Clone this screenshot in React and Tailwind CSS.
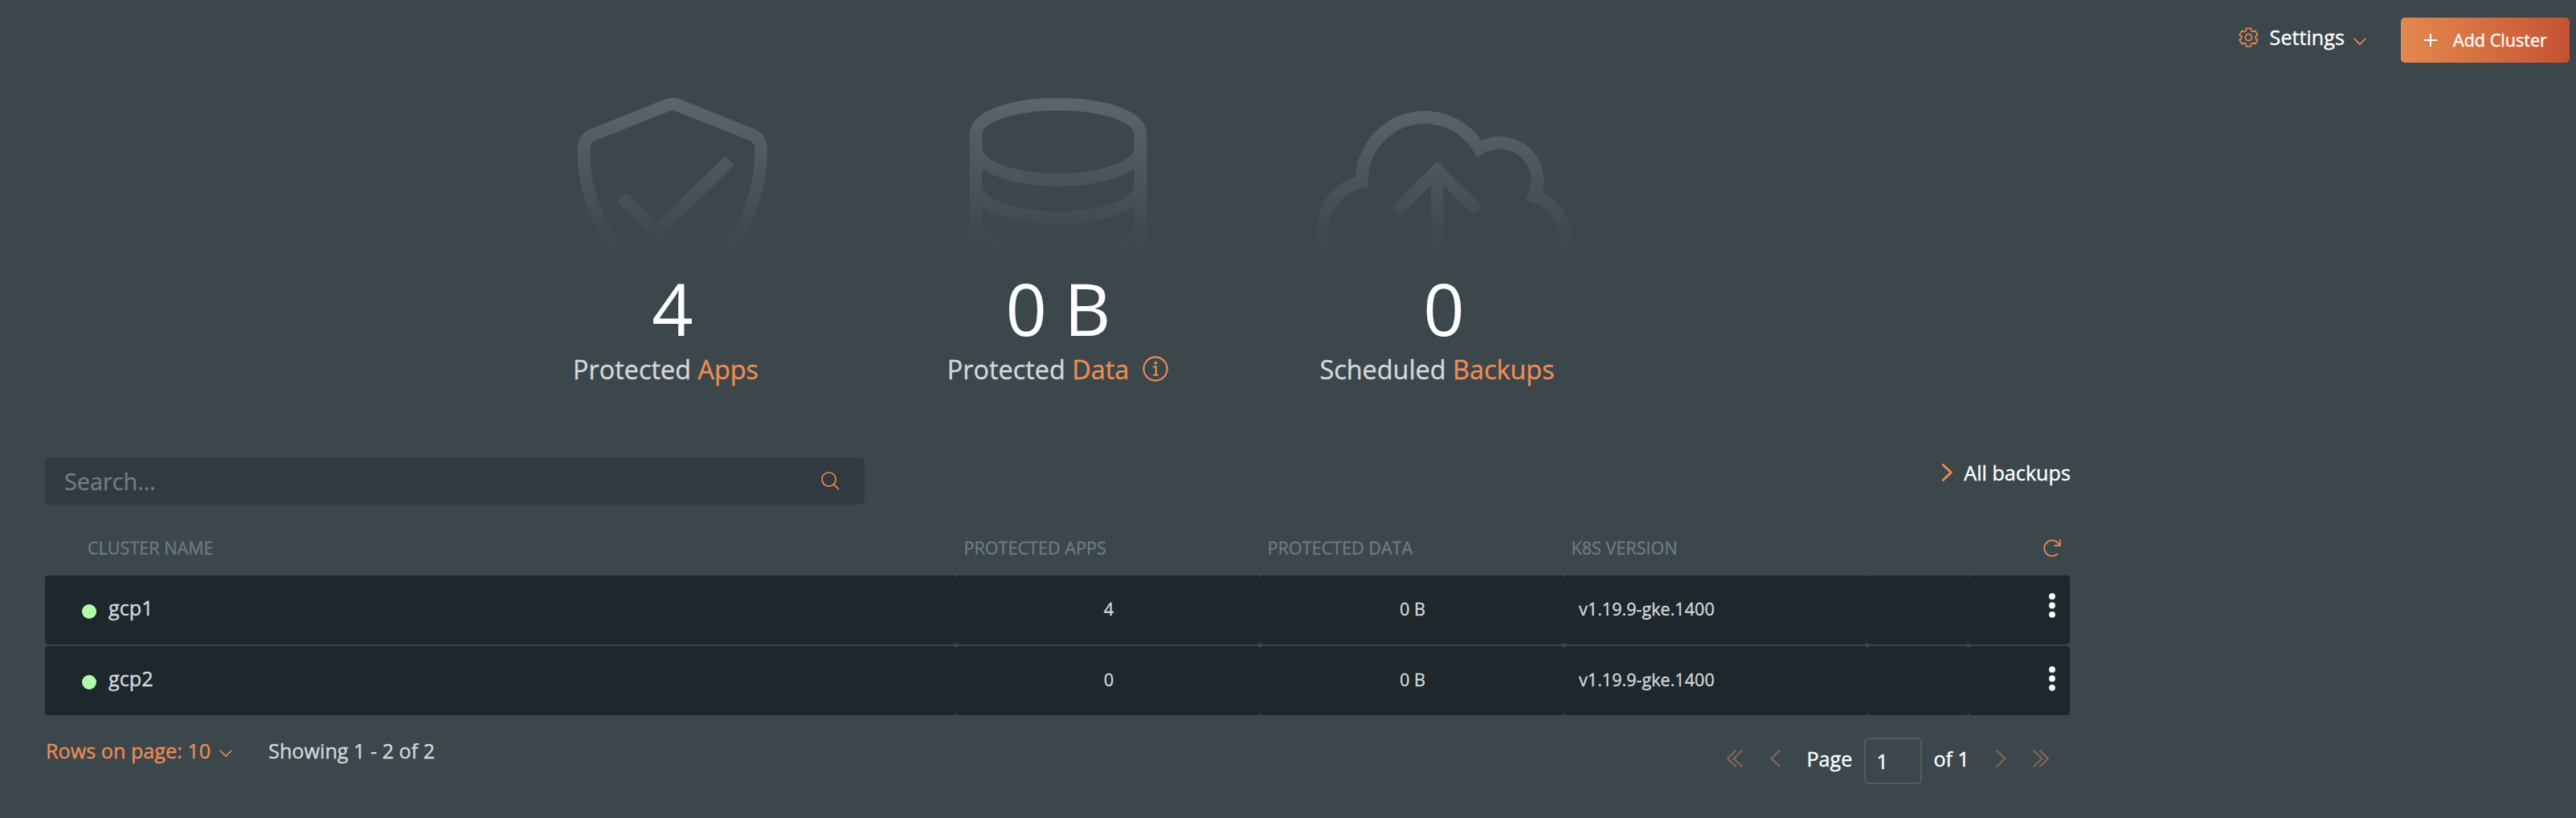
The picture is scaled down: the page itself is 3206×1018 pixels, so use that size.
const ORANGE = "#ee8b52";

function Fade({ id }) {
  return (
    <linearGradient id={id} gradientUnits="userSpaceOnUse" x1="0" y1="122" x2="0" y2="330">
      <stop offset="0" stopColor="#5b666b" />
      <stop offset="0.8" stopColor="#3f4a50" />
      <stop offset="1" stopColor="#3c474d" />
    </linearGradient>
  );
}

function ShieldArt() {
  return (
    <svg viewBox="597 122 480 208" className="h-[208px] w-[480px]" fill="none">
      <defs><Fade id="fade-shield" /></defs>
      <path
        d="M831 130.7Q837 128.8 843 130.7L938 168.6Q947.3 173.5 947.3 187C947.3 240 929 285 888 335M843 130.7Q837 128.8 831 130.7L736 168.6Q726.4 173.5 726.4 187C726.4 240 745 285 786 335"
        stroke="url(#fade-shield)" strokeWidth="15.6"
      />
      <path
        d="M779.5 243.4L772.5 251.4L818 296L909.6 205.6L902.4 198.6L818 281.2Z"
        fill="url(#fade-shield)" stroke="url(#fade-shield)" strokeWidth="6" strokeLinejoin="round"
      />
    </svg>
  );
}

function DatabaseArt() {
  return (
    <svg viewBox="1077 122 480 208" className="h-[208px] w-[480px]" fill="none">
      <defs><Fade id="fade-db" /></defs>
      <g stroke="url(#fade-db)" strokeWidth="15.7">
        <path d="M1214.5 335V168C1214.5 145 1260 129.7 1317 129.7S1419.4 145 1419.4 168V335" />
        <path d="M1214.5 185C1214.5 207 1260 223.8 1317 223.8S1419.4 207 1419.4 185" />
        <path d="M1214.5 232C1214.5 254 1260 270.9 1317 270.9S1419.4 254 1419.4 232" />
        <path d="M1214.5 279C1214.5 301 1260 318 1317 318S1419.4 301 1419.4 279" />
      </g>
    </svg>
  );
}

function CloudArt() {
  return (
    <svg viewBox="1557 122 480 208" className="h-[208px] w-[480px]" fill="none">
      <defs><Fade id="fade-cloud" /></defs>
      <path
        d="M1666 332A62 62 0 0 1 1695 226A78.3 78.3 0 0 1 1841 185A47.2 47.2 0 0 1 1909.5 244A56 56 0 0 1 1935 332"
        stroke="url(#fade-cloud)" strokeWidth="15.7"
      />
      <path
        d="M1788.7 205.2L1841 257.1L1834.5 263.8L1788.7 218.8L1743 263.8L1736.5 257.1Z"
        fill="url(#fade-cloud)" stroke="url(#fade-cloud)" strokeWidth="6" strokeLinejoin="round"
      />
      <rect x="1781" y="215" width="15.6" height="96" rx="4" fill="url(#fade-cloud)" />
    </svg>
  );
}

function gearPath() {
  const point = (deg, r) => {
    const a = (deg * Math.PI) / 180;
    return `${(12.5 + r * Math.cos(a)).toFixed(2)} ${(12.5 + r * Math.sin(a)).toFixed(2)}`;
  };
  const pts = [];
  for (let k = 0; k < 6; k++) {
    const a = -90 + k * 60;
    pts.push(point(a - 21, 8.9), point(a - 15, 11.7), point(a + 15, 11.7), point(a + 21, 8.9));
  }
  return `M${pts.join("L")}Z`;
}

function GearIcon() {
  return (
    <svg viewBox="0 0 25 25" className="h-[25px] w-[25px]" fill="none" stroke={ORANGE} strokeWidth="1.6" strokeLinejoin="round">
      <path d={gearPath()} />
      <circle cx="12.5" cy="12.5" r="4.1" />
    </svg>
  );
}

function ChevronDown({ className }) {
  return (
    <svg viewBox="0 0 16 9" className={`h-[9px] w-4 ${className}`} fill="none" stroke={ORANGE} strokeWidth="1.6">
      <path d="M0.6 0.8L8 8.1L15.4 0.8" />
    </svg>
  );
}

function Chevron({ left, double, color, width = 2.2 }) {
  return (
    <svg
      viewBox={double ? "0 0 20 22" : "0 0 13 22"}
      className={`h-[22px] ${double ? "w-5" : "w-[13px]"} ${left ? "-scale-x-100" : ""}`}
      fill="none" stroke={color} strokeWidth={width} strokeLinecap="round"
    >
      <path d="M1.3 1.4L11.3 11L1.3 20.6" />
      {double && <path d="M9 1.4L19 11L9 20.6" />}
    </svg>
  );
}

function InfoIcon() {
  return (
    <svg viewBox="0 0 32 32" className="h-8 w-8" fill="none" stroke={ORANGE} strokeWidth="2.1">
      <circle cx="16" cy="16" r="14.6" />
      <circle cx="16.3" cy="8.7" r="1.9" fill={ORANGE} stroke="none" />
      <path d="M13 13.4H16.8V23.4M13.2 23.6H19.4" />
    </svg>
  );
}

function Kebab({ className }) {
  return (
    <svg viewBox="0 0 8 31" className={`h-[31px] w-2 ${className}`} fill="#fff">
      <circle cx="4" cy="4.2" r="3.9" />
      <circle cx="4" cy="15.5" r="3.9" />
      <circle cx="4" cy="26.8" r="3.9" />
    </svg>
  );
}

function Stat({ art, value, label, accent, info }) {
  return (
    <div className="flex w-[480px] flex-col items-center">
      {art}
      <div className="mt-2 text-[90px] leading-[90px] text-white [-webkit-text-stroke:0] [word-spacing:-2px]">{value}</div>
      <div className={`mt-[11px] flex h-10 items-center text-[32.4px] leading-10 whitespace-pre text-[#d5d8da] ${info ? "pr-px" : "pr-[17px]"}`}>
        <span>{label} </span>
        <span className="text-[#ee8c55]">{accent}</span>
        {info && <span className="ml-[17px]"><InfoIcon /></span>}
      </div>
    </div>
  );
}

const COLUMNS = "grid grid-cols-[1134px_378px_378px_378px_126px_126px]";
const CELL = "flex h-[86px] items-center rounded-[4px] bg-[#1d272c]";

const clusters = [
  { name: "gcp1", apps: "4", data: "0 B", version: "v1.19.9-gke.1400", kebab: "mb-[11px]" },
  { name: "gcp2", apps: "0", data: "0 B", version: "v1.19.9-gke.1400", kebab: "mb-[6px]" },
];

function ClusterRow({ row }) {
  return (
    <div className={`${COLUMNS} text-[21.6px] text-[#d5d8da]`}>
      <div className={`${CELL} pb-[4px] pl-[46px] text-[25.2px]`}>
        <span className="mt-[8px] h-[18px] w-[18px] rounded-full bg-[#b0fca9]" />
        <span className="ml-[15px]">{row.name}</span>
      </div>
      <div className={`${CELL} justify-end pr-[182px] pb-[2px]`}>{row.apps}</div>
      <div className={`${CELL} justify-end pr-[172px] pb-[2px]`}>{row.data}</div>
      <div className={`${CELL} pb-[2px] pl-[19px]`}>{row.version}</div>
      <div className={CELL} />
      <div className={`${CELL} justify-end pr-[18px]`}><Kebab className={row.kebab} /></div>
    </div>
  );
}

export default function App() {
  return (
    <div className="flex h-[1018px] w-[3206px] flex-col overflow-hidden bg-[#3c474c] font-['Open_Sans',sans-serif] [-webkit-text-stroke:0.35px]">
      <header className="flex h-[122px] items-start justify-end pt-[22px] pr-2">
        <div className="mt-[6px] mr-[43px] flex h-9 items-center text-[25.2px] leading-9 text-white">
          <GearIcon />
          <span className="ml-[14px]">Settings</span>
          <ChevronDown className="mt-[11px] ml-[11px]" />
        </div>
        <button className="flex h-14 w-[210px] items-center rounded-[5px] bg-linear-to-r from-[#e4894f] to-[#c45233] pl-[29px] text-[21.6px] text-white">
          <svg viewBox="0 0 16 16" className="h-4 w-4" stroke="#fff" strokeWidth="2"><path d="M0 8H16M8 0V16" /></svg>
          <span className="ml-5">Add Cluster</span>
        </button>
      </header>

      <section className="ml-[597px] flex">
        <Stat art={<ShieldArt />} value="4" label="Protected" accent="Apps" />
        <Stat art={<DatabaseArt />} value="0 B" label="Protected" accent="Data" info />
        <Stat art={<CloudArt />} value="0" label="Scheduled" accent="Backups" />
      </section>

      <main className="mt-[91px] ml-14 w-[2520px]">
        <div className="flex items-start justify-between">
          <div className="flex h-[58px] w-[1020px] items-center justify-between rounded-[5px] bg-[#303a40] pr-[31px] pl-6 text-[28.8px] text-[#6f7d84]">
            <span>Search...</span>
            <svg viewBox="0 0 23 23" className="mb-[2px] h-[23px] w-[23px]" fill="none" stroke={ORANGE} strokeWidth="1.7">
              <circle cx="9.6" cy="9.6" r="8.6" />
              <path d="M15.6 15.8L22 22.2" />
            </svg>
          </div>
          <div className="-mr-px flex h-9 items-center text-[25.2px] leading-9 text-white">
            <Chevron color="#ee8b52" width={2.8} />
            <span className="ml-[14px]">All backups</span>
          </div>
        </div>

        <div className={`${COLUMNS} h-[88px] items-center pt-5 text-[21.6px] text-[#6d7b83]`}>
          <span className="pl-[53px]">CLUSTER NAME</span>
          <span className="pl-[9.5px]">PROTECTED APPS</span>
          <span className="pl-[9.5px]">PROTECTED DATA</span>
          <span className="pl-[9.5px]">K8S VERSION</span>
          <span />
          <span className="flex justify-end pr-[11px]">
            <svg viewBox="0 0 22 22" className="h-[22px] w-[22px]" fill="none" stroke={ORANGE} strokeWidth="1.7">
              <path d="M18 18.2A9.8 9.8 0 1 1 20.2 7.6" />
              <path d="M21 0.4V7.8H13.4" />
            </svg>
          </span>
        </div>

        <div className="flex flex-col gap-[2px]">
          {clusters.map((row) => <ClusterRow key={row.name} row={row} />)}
        </div>

        <footer className="flex items-start justify-between pt-[26px] pl-px text-[25.2px] leading-9">
          <div className="flex h-9 items-center">
            <span className="text-[#ee8c55]">Rows on page: 10</span>
            <ChevronDown className="mt-[7px] ml-[11px]" />
            <span className="ml-[45px] text-[#d5d8da]">Showing 1 - 2 of 2</span>
          </div>
          <div className="mt-[2px] mr-[26px] flex h-[52px] items-center text-white">
            <Chevron left double color="#7d6658" />
            <span className="ml-[34px]"><Chevron left color="#7d6658" /></span>
            <span className="ml-8">Page</span>
            <span className="mt-[6px] mr-[14px] ml-[15px] flex h-[58px] w-[72px] items-center rounded-[6px] border-2 border-[#525d63] pl-[13px]">1</span>
            <span>of 1</span>
            <span className="ml-[33px]"><Chevron color="#7d6658" /></span>
            <span className="ml-[33px]"><Chevron double color="#7d6658" /></span>
          </div>
        </footer>
      </main>
    </div>
  );
}
